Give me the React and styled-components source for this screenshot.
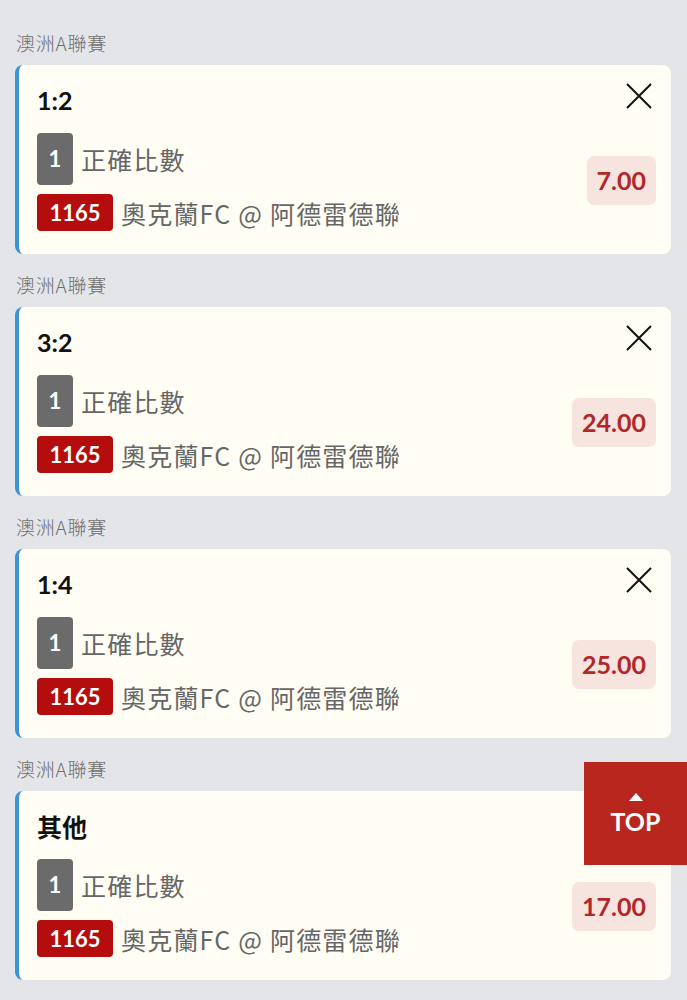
import React from 'react';
import styled, { createGlobalStyle } from 'styled-components';

const GlobalStyle = createGlobalStyle`
  html, body {
    margin: 0;
    padding: 0;
    background: #e4e5e9;
  }
  body {
    font-family: Lato, "Noto Sans CJK TC", sans-serif;
  }
`;

const Page = styled.div`
  padding: 12px 16px 24px 15px;
`;

const Group = styled.section`
  padding-top: 20px;
`;

const League = styled.div`
  font-family: "Noto Sans CJK TC", sans-serif;
  font-size: 19px;
  font-weight: 300;
  line-height: 22px;
  letter-spacing: 0.8px;
  color: #6e6e6e;
  padding-left: 1px;
  margin-bottom: 11px;
`;

const Card = styled.div`
  background: #fffdf4;
  border-left: 4px solid #3d93d4;
  border-radius: 8px;
  padding: 20px 15px 23px 18px;
  display: flex;
  flex-direction: column;
`;

const Header = styled.div`
  display: flex;
  align-items: center;
  justify-content: space-between;
  height: 30px;
  margin-bottom: 18px;
`;

const Title = styled.div`
  font-size: 25px;
  font-weight: 700;
  color: #111;
`;

const Close = styled.button`
  border: 0;
  background: none;
  padding: 0;
  margin-top: -8px;
  margin-right: 4px;
  width: 26px;
  height: 26px;
  display: flex;
  align-items: center;
  justify-content: center;
`;

const Body = styled.div`
  display: flex;
  align-items: center;
  justify-content: space-between;
`;

const Lines = styled.div`
  display: flex;
  flex-direction: column;
  gap: 9px;
`;

const Line = styled.div`
  display: flex;
  align-items: center;
  gap: 8px;
  font-family: "Noto Sans CJK TC", sans-serif;
  font-size: 25px;
  line-height: 30px;
  letter-spacing: 1.2px;
  color: #666;
`;

const Badge = styled.span`
  display: flex;
  align-items: center;
  justify-content: center;
  border-radius: 4px;
  color: #fff;
  font-family: Lato, sans-serif;
  font-weight: 700;
  font-size: 22px;
  letter-spacing: 0;
  background: ${(p) => (p.$red ? '#b50d0d' : '#6b6b6b')};
  height: ${(p) => (p.$red ? '37px' : '52px')};
  min-width: ${(p) => (p.$red ? '76px' : '36px')};
`;

const Odds = styled.div`
  background: #f7e4df;
  color: #b0282a;
  font-size: 25px;
  font-weight: 700;
  border-radius: 7px;
  padding: 0 10px;
  height: 49px;
  margin-top: -4px;
  display: flex;
  align-items: center;
`;

const TopButton = styled.button`
  position: fixed;
  right: 0;
  top: 762px;
  width: 103px;
  height: 103px;
  border: 0;
  background: #b8261e;
  color: #fff;
  font-family: Lato, sans-serif;
  font-weight: 700;
  font-size: 25px;
  display: flex;
  flex-direction: column;
  align-items: center;
  justify-content: center;
  gap: 5px;
  padding: 2px 0 0;
`;

const Arrow = styled.span`
  width: 0;
  height: 0;
  border-left: 7px solid transparent;
  border-right: 7px solid transparent;
  border-bottom: 8px solid #fff;
`;

const bets = [
  { score: '1:2', odds: '7.00' },
  { score: '3:2', odds: '24.00' },
  { score: '1:4', odds: '25.00' },
  { score: '其他', odds: '17.00' },
];

function CloseIcon() {
  return (
    <svg width="26" height="26" viewBox="0 0 26 26">
      <path d="M1 1L25 25M25 1L1 25" stroke="#111" strokeWidth="2" fill="none" />
    </svg>
  );
}

export default function App() {
  return (
    <Page>
      <GlobalStyle />
      {bets.map((bet, i) => (
        <Group key={i}>
          <League>澳洲A聯賽</League>
          <Card>
            <Header>
              <Title>{bet.score}</Title>
              <Close aria-label="close">
                <CloseIcon />
              </Close>
            </Header>
            <Body>
              <Lines>
                <Line>
                  <Badge>1</Badge>
                  正確比數
                </Line>
                <Line>
                  <Badge $red>1165</Badge>
                  奧克蘭FC @ 阿德雷德聯
                </Line>
              </Lines>
              <Odds>{bet.odds}</Odds>
            </Body>
          </Card>
        </Group>
      ))}
      <TopButton>
        <Arrow />
        TOP
      </TopButton>
    </Page>
  );
}
